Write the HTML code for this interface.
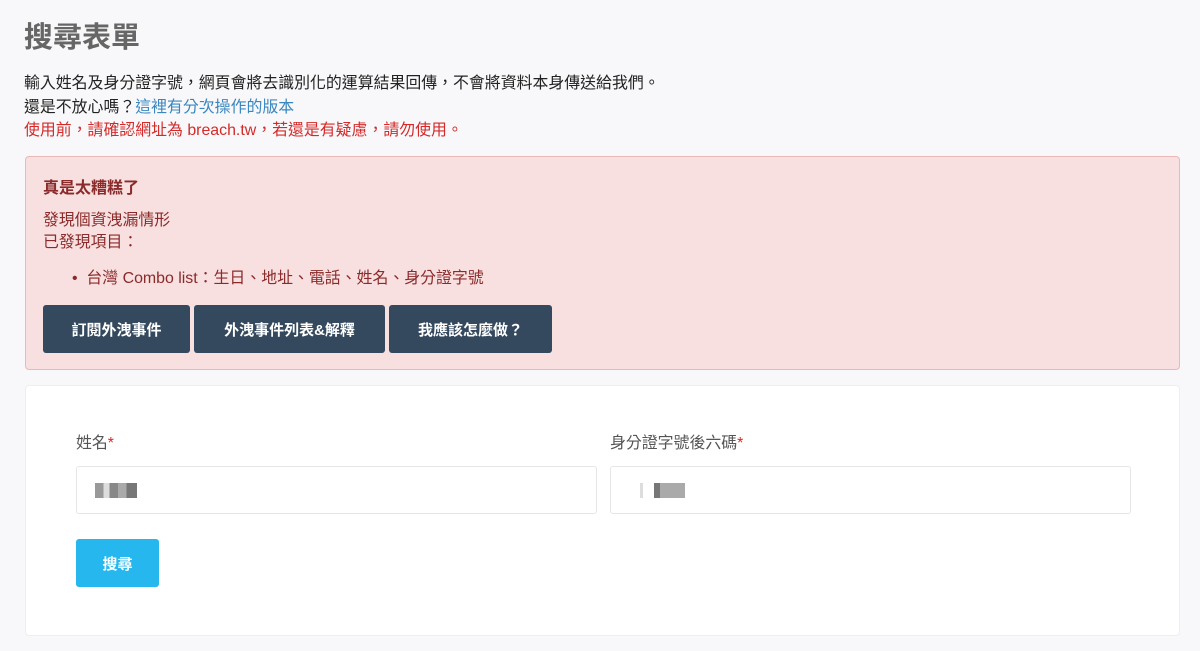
<!DOCTYPE html>
<html><head><meta charset="utf-8"><style>
*{box-sizing:border-box;margin:0;padding:0}
body{width:1200px;height:651px;background:#f8f8fa;font-family:"Liberation Sans","Noto Sans CJK TC",sans-serif;color:#222;overflow:hidden;position:relative}
.abs{position:absolute;white-space:nowrap}
h1{position:absolute;left:24px;top:18px;font-size:29px;font-weight:bold;color:#666;line-height:40px}
.t{font-size:15.9px;line-height:21px}
.alert{position:absolute;left:25px;top:156px;width:1155px;height:214px;background:#f8e0e0;border:1px solid #eab8b8;border-radius:4px;color:#8a2a2a}
.btn{position:absolute;top:148px;height:48px;background:#34495e;color:#fff;font-weight:bold;font-size:15px;border-radius:3px;display:flex;align-items:center;justify-content:center}
.card{position:absolute;left:25px;top:385px;width:1155px;height:251px;background:#fff;border:1px solid #eee;border-radius:4px}
.inp{position:absolute;top:80px;height:48px;border:1px solid #e6e6e6;border-radius:3px;background:#fff}
.blur{position:absolute;top:16px;height:15px;background:linear-gradient(90deg,#999 0 20%,#ddd 20% 35%,#888 35% 55%,#aaa 55% 75%,#777 75%)}
</style></head><body>
<h1>搜尋表單</h1>
<div class="abs t" style="left:24px;top:73px">輸入姓名及身分證字號，網頁會將去識別化的運算結果回傳，不會將資料本身傳送給我們。</div>
<div class="abs t" style="left:24px;top:97px">還是不放心嗎？<span style="color:#3a87c0">這裡有分次操作的版本</span></div>
<div class="abs t" style="left:24px;top:120px;color:#d42a2a">使用前，請確認網址為 breach.tw，若還是有疑慮，請勿使用。</div>
<div class="alert">
<div class="abs" style="left:17px;top:17px;font-size:16px;font-weight:bold">真是太糟糕了</div>
<div class="abs t" style="left:17px;top:53px">發現個資洩漏情形</div>
<div class="abs t" style="left:17px;top:75px">已發現項目：</div>
<div class="abs t" style="left:46px;top:111px">•&nbsp;&nbsp;台灣 Combo list：生日、地址、電話、姓名、身分證字號</div>
<div class="btn" style="left:17px;width:147px">訂閱外洩事件</div>
<div class="btn" style="left:168px;width:191px">外洩事件列表&amp;解釋</div>
<div class="btn" style="left:363px;width:163px">我應該怎麼做？</div>
</div>
<div class="card">
<div class="abs t" style="left:50px;top:47px;color:#555">姓名<span style="color:#d42a2a">*</span></div>
<div class="abs t" style="left:584px;top:47px;color:#555">身分證字號後六碼<span style="color:#d42a2a">*</span></div>
<div class="inp" style="left:50px;width:521px"><div class="blur" style="left:18px;width:42px"></div></div>
<div class="inp" style="left:584px;width:521px"><div class="blur" style="left:18px;width:56px;background:linear-gradient(90deg,#fff 0 20%,#ddd 20% 25%,#fff 25% 45%,#777 45% 55%,#aaa 55%)"></div></div>
<div class="abs" style="left:50px;top:153px;width:83px;height:48px;background:#25b7ee;border-radius:3px;color:#fff;font-weight:bold;font-size:15px;display:flex;align-items:center;justify-content:center">搜尋</div>
</div>
</body></html>
